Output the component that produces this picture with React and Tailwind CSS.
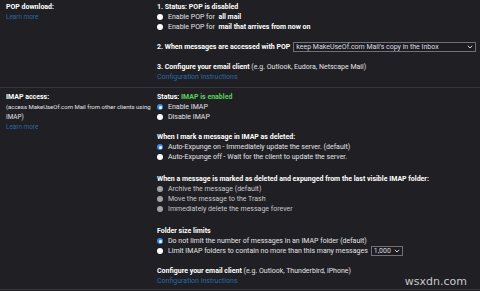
import React from 'react';

const Radio = ({ state = 'off' }) => {
  if (state === 'on') {
    return (
      <span className="inline-flex w-[6px] h-[6px] rounded-full bg-[#3d8ae8] items-center justify-center mr-[5px] shrink-0">
        <span className="w-[3px] h-[3px] rounded-full bg-white" />
      </span>
    );
  }
  if (state === 'disabled') {
    return <span className="inline-block w-[6px] h-[6px] rounded-full bg-[#a3a3a6] mr-[5px] shrink-0" />;
  }
  return <span className="inline-block w-[6px] h-[6px] rounded-full bg-white mr-[5px] shrink-0" />;
};

const Option = ({ state, children }) => (
  <div className="flex items-center h-[10px] whitespace-nowrap">
    <Radio state={state} />
    <span className={state === 'disabled' ? 'text-[#c9c9cc]' : ''}>{children}</span>
  </div>
);

const Line = ({ children, className = '' }) => (
  <div className={`h-[10px] flex items-center whitespace-nowrap ${className}`}>{children}</div>
);

const Chevron = () => (
  <svg width="6" height="4" viewBox="0 0 6 4" className="shrink-0">
    <path d="M0.8 0.8 L3 3 L5.2 0.8" fill="none" stroke="#d7d7da" strokeWidth="1" />
  </svg>
);

const Select = ({ value, className = '' }) => (
  <div className={`h-[10px] flex items-center justify-between border border-[#707075] bg-[#1d1d21] px-[2px] ${className}`}>
    <span className="text-[#dcdce0]">{value}</span>
    <Chevron />
  </div>
);

const link = 'text-[#2a6aa6]';

export default function App() {
  return (
    <div
      className="relative w-[480px] h-[291px] overflow-hidden bg-[#1f1f24] text-[#e4e4e7] text-[7px] leading-[10px]"
      style={{ fontFamily: 'Roboto, "Liberation Sans", Arial, sans-serif' }}
    >
      {/* POP */}
      <div className="flex pt-[2px] pb-[5px]">
        <div className="w-[157px] shrink-0 pl-[6px] text-[6.4px]">
          <Line className="font-bold text-white text-[7px]">POP download:</Line>
          <Line className={link}>Learn more</Line>
        </div>
        <div className="flex-1">
          <Line className="font-bold text-white">1. Status: POP is disabled</Line>
          <Option>Enable POP for <b className="text-white">&nbsp;all mail</b></Option>
          <Option>Enable POP for <b className="text-white">&nbsp;mail that arrives from now on</b></Option>
          <div className="flex items-center h-[10px] mt-[10px]">
            <span className="font-bold text-white mr-[3px] whitespace-nowrap">2. When messages are accessed with POP</span>
            <Select value="keep MakeUseOf.com Mail's copy in the Inbox" className="w-[183px]" />
          </div>
          <Line className="mt-[10px]">
            <b className="text-white">3. Configure your email client</b>&nbsp;(e.g. Outlook, Eudora, Netscape Mail)
          </Line>
          <Line className={link}>Configuration instructions</Line>
        </div>
      </div>

      <div className="h-px bg-[#36363b]" />

      {/* IMAP */}
      <div className="flex pt-[4px] pb-[3px]">
        <div className="w-[157px] shrink-0 pl-[6px] text-[6.4px]">
          <Line className="font-bold text-white text-[7px]">IMAP access:</Line>
          <Line className="text-[6px]">(access MakeUseOf.com Mail from other clients using</Line>
          <Line>IMAP)</Line>
          <Line className={link}>Learn more</Line>
        </div>
        <div className="flex-1">
          <Line className="font-bold text-white">
            Status:&nbsp;<span className="text-[#5ad35a]">IMAP is enabled</span>
          </Line>
          <Option state="on">Enable IMAP</Option>
          <Option>Disable IMAP</Option>

          <Line className="mt-[10px] font-bold text-white">When I mark a message in IMAP as deleted:</Line>
          <Option state="on">Auto-Expunge on - Immediately update the server. (default)</Option>
          <Option>Auto-Expunge off - Wait for the client to update the server.</Option>

          <Line className="mt-[12px] font-bold text-white">
            When a message is marked as deleted and expunged from the last visible IMAP folder:
          </Line>
          <Option state="disabled">Archive the message (default)</Option>
          <Option state="disabled">Move the message to the Trash</Option>
          <Option state="disabled">Immediately delete the message forever</Option>

          <Line className="mt-[12px] font-bold text-white">Folder size limits</Line>
          <Option state="on">Do not limit the number of messages in an IMAP folder (default)</Option>
          <div className="flex items-center h-[10px]">
            <Radio />
            <span className="mr-[3px] whitespace-nowrap">Limit IMAP folders to contain no more than this many messages</span>
            <Select value="1,000" className="w-[32px]" />
          </div>

          <Line className="mt-[10px]">
            <b className="text-white">Configure your email client</b>&nbsp;(e.g. Outlook, Thunderbird, iPhone)
          </Line>
          <Line className={link}>Configuration instructions</Line>
        </div>
      </div>

      <div className="h-px bg-[#36363b]" />

      <div className="absolute right-[13px] bottom-[3px] text-[11px] leading-[12px] text-[#c8c8cc]" style={{ fontFamily: '"DejaVu Sans", sans-serif' }}>
        wsxdn.com
      </div>
    </div>
  );
}
